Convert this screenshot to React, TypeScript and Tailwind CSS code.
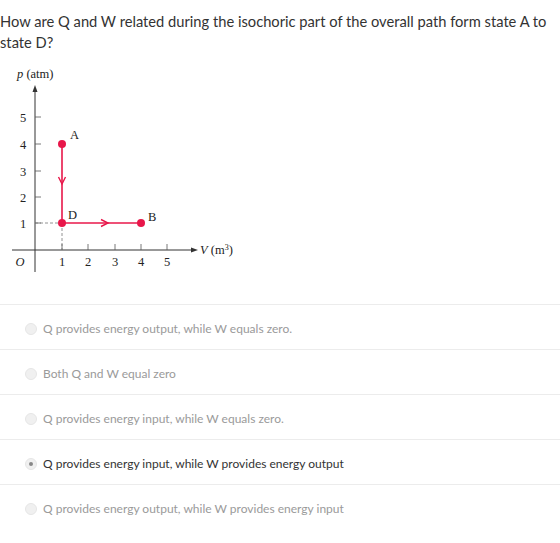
import React from "react";

const options = [
  { text: "Q provides energy output, while W equals zero.", selected: false },
  { text: "Both Q and W equal zero", selected: false },
  { text: "Q provides energy input, while W equals zero.", selected: false },
  { text: "Q provides energy input, while W provides energy output", selected: true },
  { text: "Q provides energy output, while W provides energy input", selected: false },
];

const serif = { fontFamily: "'Liberation Serif', serif" };

function PVDiagram() {
  const red = "#e8174a";
  const xs = [62, 88, 115, 141, 167];
  const ys = [224, 198, 172, 145, 118];
  return (
    <svg width="250" height="230" viewBox="0 60 250 230" style={serif}>
      {/* axes */}
      <line x1="35" y1="92" x2="35" y2="273" stroke="#333" strokeWidth="1" />
      <path d="M35 86 L32.5 93 L37.5 93 Z" fill="#333" />
      <line x1="12" y1="251" x2="192" y2="251" stroke="#333" strokeWidth="1" />
      <path d="M198 251 L191 248.5 L191 253.5 Z" fill="#333" />
      <text x="17" y="79" fontSize="12.5" fill="#222">
        <tspan fontStyle="italic">p</tspan> (atm)
      </text>
      <text x="200" y="255" fontSize="12.5" fill="#222">
        <tspan fontStyle="italic">V</tspan> (m<tspan fontSize="8" dy="-4">3</tspan>
        <tspan dy="4">)</tspan>
      </text>
      {/* y ticks */}
      {ys.map((y, i) => (
        <g key={y}>
          <line x1="35" y1={y} x2="41" y2={y} stroke="#555" strokeWidth="0.8" />
          <text x="23" y={y + 4.5} fontSize="12.5" fill="#222" textAnchor="middle">
            {i + 1}
          </text>
        </g>
      ))}
      {/* x ticks */}
      {xs.map((x, i) => (
        <g key={x}>
          <line x1={x} y1="245" x2={x} y2="251" stroke="#555" strokeWidth="0.8" />
          <text x={x} y="267" fontSize="12.5" fill="#222" textAnchor="middle">
            {i + 1}
          </text>
        </g>
      ))}
      <text x="20" y="267" fontSize="12.5" fontStyle="italic" fill="#222" textAnchor="middle">
        O
      </text>
      {/* dashed guides to D */}
      <line x1="35" y1="224" x2="62" y2="224" stroke="#777" strokeWidth="0.8" strokeDasharray="3 2" />
      <line x1="62" y1="224" x2="62" y2="251" stroke="#777" strokeWidth="0.8" strokeDasharray="3 2" />
      {/* path A -> D -> B */}
      <line x1="62" y1="145" x2="62" y2="224" stroke={red} strokeWidth="1.6" />
      <line x1="62" y1="224" x2="141" y2="224" stroke={red} strokeWidth="1.6" />
      <path d="M58.5 178 L62 185 L65.5 178" fill="none" stroke={red} strokeWidth="1.4" />
      <path d="M101 220.5 L108 224 L101 227.5" fill="none" stroke={red} strokeWidth="1.4" />
      <circle cx="62" cy="145" r="4" fill={red} />
      <circle cx="62" cy="224" r="4" fill={red} />
      <circle cx="141" cy="224" r="4" fill={red} />
      <text x="70" y="140" fontSize="12.5" fill="#222">A</text>
      <text x="68" y="220" fontSize="12.5" fill="#222">D</text>
      <text x="148" y="222" fontSize="12.5" fill="#222">B</text>
    </svg>
  );
}

export default function App() {
  return (
    <div className="w-[560px] h-[543px] bg-white" style={{ fontFamily: "Lato, sans-serif" }}>
      <p className="pt-[11px] text-[14.7px] leading-[21px] text-[#333]">
        How are Q and W related during the isochoric part of the overall path form state A to state D?
      </p>
      <div className="h-[251px] pt-[6px]">
        <PVDiagram />
      </div>
      <div>
        {options.map((o) => (
          <div
            key={o.text}
            className="flex h-[45px] items-center gap-[6px] border-t border-[#ececec] pl-[25px] pt-[3px]"
          >
            <span className="flex h-[12px] w-[12px] items-center justify-center rounded-full border border-[#e6e6e6] bg-[#f0f0f0]">
              {o.selected && <span className="h-[4px] w-[4px] rounded-full bg-[#888]" />}
            </span>
            <span className={o.selected ? "text-[12px] text-[#333]" : "text-[12px] text-[#9a9a9a]"}>
              {o.text}
            </span>
          </div>
        ))}
      </div>
    </div>
  );
}
